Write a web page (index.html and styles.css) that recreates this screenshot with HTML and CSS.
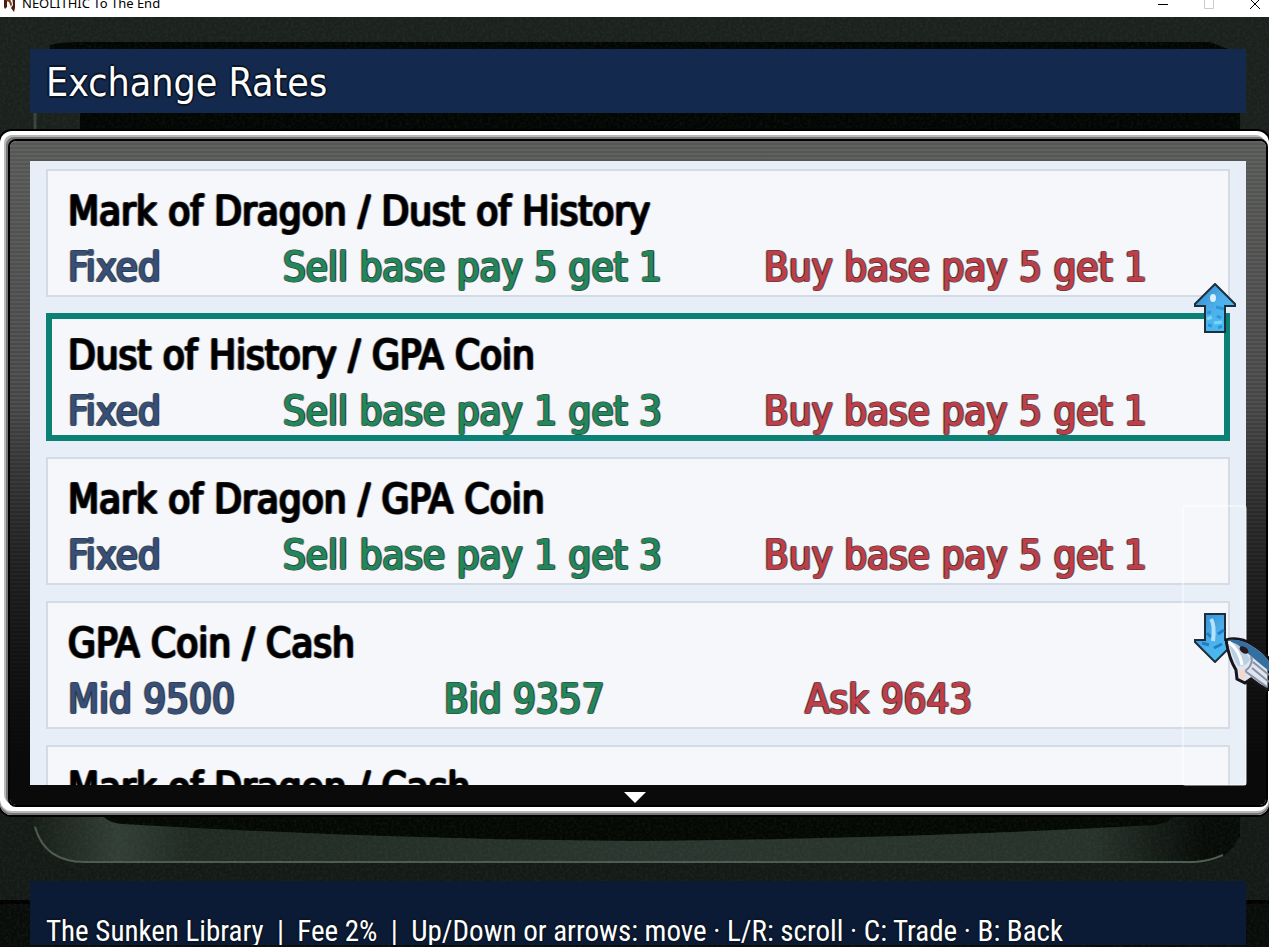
FILE: index.html
```html
<!DOCTYPE html>
<html lang="en">
<head>
  <meta charset="UTF-8">
  <meta name="viewport" content="width=device-width, initial-scale=1.0">
  <title>NEOLITHIC To The End</title>
  <link rel="stylesheet" href="styles.css">
</head>
<body>
  <div class="titlebar">
    <svg class="logo" width="16" height="16" viewBox="0 0 16 16" aria-hidden="true">
      <path d="M2 1L5 3L5 11L3 13L2 11Z" fill="#4a1c10"/>
      <path d="M4 1L8 3L10 8L9 11L7 6L4 5Z" fill="#7c3a1e"/>
      <path d="M10 0L13 2L13 12L12 16L9 12L11 9Z" fill="#4a1c10"/>
    </svg>
    <span class="app-name">NEOLITHIC To The End</span>
    <div class="window-buttons">
      <button type="button" aria-label="Minimize"><svg width="10" height="10" viewBox="0 0 10 10"><path d="M0 5.5H10" stroke="#000"/></svg></button>
      <button type="button" aria-label="Maximize" disabled><svg width="10" height="10" viewBox="0 0 10 10"><path d="M.5 .5H9.500V9.500H.5Z" stroke="#ccc" fill="none"/></svg></button>
      <button type="button" aria-label="Close"><svg width="10" height="10" viewBox="0 0 10 10"><path d="M0 0L10 10M10 0L0 10" stroke="#000"/></svg></button>
    </div>
  </div>

  <main class="game">
    <svg class="backdrop" viewBox="0 0 1269 930" preserveAspectRatio="none" aria-hidden="true">
      <defs>
        <linearGradient id="wall" x1="0" y1="0" x2="0" y2="1">
          <stop offset="0" stop-color="#1b211c"/>
          <stop offset="1" stop-color="#131914"/>
        </linearGradient>
        <linearGradient id="lip" x1="0" y1="0" x2="1" y2="0">
          <stop offset="0" stop-color="#161d17"/>
          <stop offset=".07" stop-color="#313e36"/>
          <stop offset=".13" stop-color="#202a23"/>
          <stop offset=".5" stop-color="#29352e"/>
          <stop offset=".88" stop-color="#27322b"/>
          <stop offset=".97" stop-color="#070b07"/>
        </linearGradient>
        <filter id="grain" x="0" y="0" width="1" height="1">
          <feTurbulence type="fractalNoise" baseFrequency=".35" numOctaves="2" seed="4"/>
          <feColorMatrix values="0 0 0 0 .5  0 0 0 0 .56  0 0 0 0 .5  .5 0 0 0 -.18"/>
        </filter>
      </defs>
      <rect width="1269" height="930" fill="url(#wall)"/>
      <path d="M50 28Q62 25 80 25H1210L1228 32L1240 60V820H80V96H50Z" fill="#020602"/>
      <path d="M33 96H80V125H33Z" fill="#1a211c"/>
      <path d="M35 96V125" stroke="#39433c" stroke-width="3"/>
      <path d="M33 790H1240V815Q1232 846 1195 846H85Q42 846 33 810Z" fill="url(#lip)"/>
      <path d="M95 790L104 800Q110 806 122 807Q400 823 640 824Q900 822 1155 808Q1170 806 1178 795L1185 790Z" fill="#030803"/>
      <path d="M35 810Q45 845 85 845H1195Q1210 844 1223 838" fill="none" stroke="#4c5a50" stroke-width="2"/>
      <rect y="885" width="1269" height="45" fill="#070c08"/>
      <rect y="883" width="1269" height="4" fill="#000"/>
      <rect width="1269" height="930" filter="url(#grain)" opacity=".25"/>
    </svg>

    <h1 class="heading">Exchange Rates</h1>

    <section class="frame">
      <div class="frame-body">
        <ul class="rates">
          <li class="rate">
            <h2>Mark of Dragon / Dust of History</h2>
            <p class="terms"><span class="kind">Fixed</span><span class="sell">Sell base pay 5 get 1</span><span class="buy">Buy base pay 5 get 1</span></p>
          </li>
          <li class="rate selected">
            <h2>Dust of History / GPA Coin</h2>
            <p class="terms"><span class="kind">Fixed</span><span class="sell">Sell base pay 1 get 3</span><span class="buy">Buy base pay 5 get 1</span></p>
          </li>
          <li class="rate">
            <h2>Mark of Dragon / GPA Coin</h2>
            <p class="terms"><span class="kind">Fixed</span><span class="sell">Sell base pay 1 get 3</span><span class="buy">Buy base pay 5 get 1</span></p>
          </li>
          <li class="rate">
            <h2>GPA Coin / Cash</h2>
            <p class="terms quote"><span class="kind">Mid 9500</span><span class="sell">Bid 9357</span><span class="buy">Ask 9643</span></p>
          </li>
          <li class="rate">
            <h2>Mark of Dragon / Cash</h2>
          </li>
        </ul>

        <div class="touch-pad"></div>
        <button class="arrow arrow-up" type="button" aria-label="Scroll up">
          <svg width="42" height="50" viewBox="0 0 42 50">
            <defs>
              <linearGradient id="ice" x1="0" y1="0" x2="1" y2="1">
                <stop offset="0" stop-color="#2f86cf"/>
                <stop offset=".5" stop-color="#4fb0ea"/>
                <stop offset="1" stop-color="#43c3f4"/>
              </linearGradient>
            </defs>
            <path d="M21 1L41 21V23H31V49H11V23H1V21Z" fill="url(#ice)" stroke="#1d2f3d" stroke-width="2"/>
            <path d="M22 24L30 26M13 30L17 29M23 33L27 35M14 42L18 43M24 45L28 43" stroke="#2a97d8" stroke-width="3"/>
            <path d="M13 36L18 34M20 40L28 39" stroke="#7ad6f8" stroke-width="3"/>
            <ellipse cx="19" cy="15" rx="3" ry="4" fill="#d9f1ff"/>
          </svg>
        </button>
        <button class="arrow arrow-down" type="button" aria-label="Scroll down">
          <svg width="42" height="50" viewBox="0 0 42 50">
            <path d="M11 1H31V27H41V29L21 49L1 29V27H11Z" fill="url(#ice)" stroke="#1d2f3d" stroke-width="2"/>
            <path d="M24 21L30 17M13 20L17 24M20 35L28 31M8 30L15 32" stroke="#1f7fca" stroke-width="3"/>
            <path d="M17 6Q21 12 19 28" stroke="#b4e2fb" stroke-width="4" fill="none"/>
          </svg>
        </button>
        <svg class="more" width="22" height="12" viewBox="0 0 22 12" aria-hidden="true"><path d="M0 1H22L11 12Z" fill="#fff"/></svg>
      </div>
      <svg class="cursor" width="44" height="54" viewBox="0 0 44 54" aria-hidden="true">
        <path d="M1 3Q14 -1 28 8Q38 14 44 22V53Q34 49 26 42L20 46L12 42L11 33Q4 22 1 3Z" fill="#dfe5ef" stroke="#17141a" stroke-width="3"/>
        <path d="M2 3Q14 1 27 9Q38 16 44 24V34Q34 26 27 20Q14 8 2 3Z" fill="#356f9f"/>
        <path d="M4 4Q18 8 25 22Q22 30 13 29Q6 18 4 4Z" fill="#b9cfe3"/>
        <path d="M4 5Q15 14 17 28" fill="none" stroke="#fff" stroke-width="3"/>
        <path d="M26 19Q29 28 20 34L42 50M28 25L44 38M27 31L44 45" fill="none" stroke="#8791a3" stroke-width="2"/>
        <ellipse cx="19" cy="13" rx="5" ry="3" transform="rotate(35 19 13)" fill="#2a1820"/>
        <path d="M13 34L20 33L21 41L16 42Z" fill="#f3d7cf"/>
      </svg>
    </section>

    <footer class="status">The Sunken Library &nbsp;|&nbsp; Fee 2% &nbsp;|&nbsp; Up/Down or arrows: move · L/R: scroll · C: Trade · B: Back</footer>
  </main>
</body>
</html>
```

FILE: styles.css
```css
* {
  box-sizing: border-box;
}
body {
  margin: 0;
  height: 100vh;
  display: flex;
  flex-direction: column;
  overflow: hidden;
  background: #000;
  font-family: 'DejaVu Sans Condensed', 'DejaVu Sans', sans-serif;
}
h1, h2, p, ul {
  margin: 0;
  padding: 0;
  font-weight: normal;
}
button {
  padding: 0;
  border: none;
  background: none;
}
svg {
  display: block;
}
.titlebar {
  height: 17px;
  flex: none;
  display: flex;
  align-items: flex-end;
  padding: 0 4px 5px 0;
  background: #fff;
  color: #000;
}
.logo {
  margin: 0 4px 0 2px;
}
.app-name {
  font: 13px/18px 'Noto Sans', sans-serif;
}
.window-buttons {
  display: flex;
  gap: 36px;
  margin: 0 5px 3px auto;
}
.game {
  position: relative;
  flex: 1;
  min-height: 0;
  display: flex;
  flex-direction: column;
  padding-bottom: 2px;
}
.backdrop {
  position: absolute;
  inset: 0;
  width: 100%;
  height: 100%;
}
.heading, .status {
  position: relative;
  flex: none;
  height: 64px;
  margin: 0 23px 0 30px;
  padding-left: 16px;
  color: #fff;
  white-space: nowrap;
  overflow: hidden;
  text-shadow: 2px 0 #0a1526, -2px 0 #0a1526, 0 2px #0a1526, 0 -2px #0a1526;
}
.heading {
  margin-top: 32px;
  background: #132a4e;
  font-size: 39px;
  line-height: 68px;
}
.status {
  margin-top: 66px;
  background: #0c1b35;
  font-family: 'Roboto Condensed', 'Open Sans Condensed', Lato, sans-serif;
  font-size: 29px;
  line-height: 100px;
}
.frame {
  position: relative;
  flex: 1;
  min-height: 0;
  display: flex;
  margin-top: 18px;
  padding: 10px 3px 10px 10px;
  border-radius: 12px;
  background: #fff;
  box-shadow: inset 0 -2px #777, inset 0 -4px #b8b8b8, 0 0 0 2px #000;
}
.frame-body {
  position: relative;
  flex: 1;
  min-width: 0;
  padding: 20px;
  border-radius: 6px;
  background:
    linear-gradient(transparent 40%, #0a0a0a 95%),
    repeating-linear-gradient(rgba(255, 255, 255, 0.06) 0 2px, transparent 2px 4px),
    linear-gradient(#565855, #484848 35%, #222 80%, #070707);
  box-shadow: 0 0 0 2px #000, -2px -2px 0 2px #777, -4px -4px 0 2px #b8b8b8;
}
.rates {
  height: 100%;
  padding: 8px 16px;
  overflow: hidden;
  list-style: none;
  background: #e7eef7;
}
.rate {
  height: 128px;
  margin-bottom: 16px;
  padding: 14px 22px;
  background: #f5f7fb;
  box-shadow: inset 0 0 0 2px #d3dbe5;
}
.rate.selected {
  box-shadow: inset 0 0 0 6px #0b8075;
}
.rate h2, .terms {
  font-size: 40px;
  line-height: 56px;
  white-space: nowrap;
  color: #000;
  -webkit-text-stroke: 1px currentColor;
  text-shadow:
    1px 1px rgba(0, 0, 0, 0.6), -1px -1px rgba(0, 0, 0, 0.6),
    1px -1px rgba(0, 0, 0, 0.6), -1px 1px rgba(0, 0, 0, 0.6),
    2px 0 rgba(0, 0, 0, 0.3), -2px 0 rgba(0, 0, 0, 0.3);
}
.terms {
  display: grid;
  grid-template-columns: 215fr 481fr 444fr;
}
.quote {
  grid-template-columns: 376fr 361fr 403fr;
}
.kind {
  color: #36507a;
}
.sell {
  color: #22875a;
}
.buy {
  color: #bf3f48;
}
.touch-pad {
  position: absolute;
  right: 19px;
  bottom: 19px;
  width: 65px;
  height: 281px;
  border: 2px solid rgba(255, 255, 255, 0.4);
  border-radius: 4px;
  background: rgba(255, 255, 255, 0.08);
}
.arrow {
  position: absolute;
  right: 30px;
}
.arrow-up {
  top: 142px;
}
.arrow-down {
  bottom: 142px;
}
.more {
  position: absolute;
  bottom: 2px;
  left: calc(50% - 14px);
}
.cursor {
  position: absolute;
  right: 0;
  bottom: 124px;
}
```
